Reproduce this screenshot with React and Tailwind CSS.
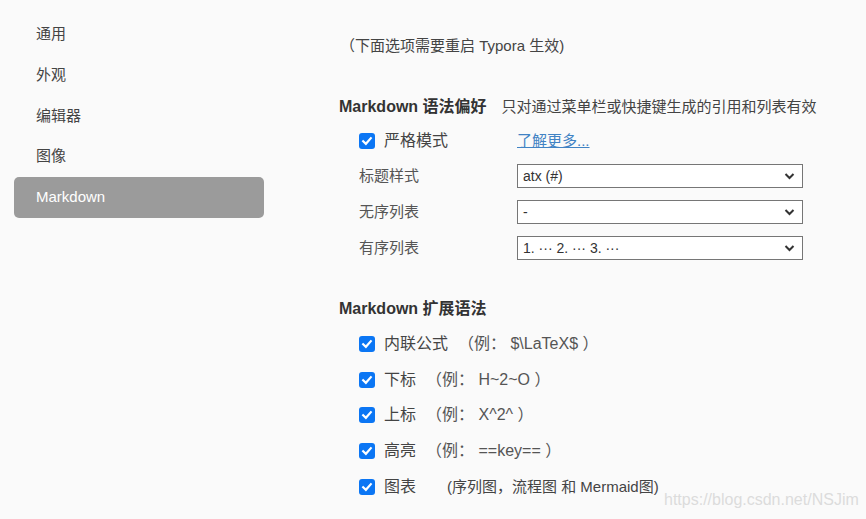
import React from "react";

const font = { fontFamily: '"Liberation Sans", Arial, "Noto Sans CJK SC", sans-serif' };

function Check() {
  return (
    <span className="inline-flex items-center justify-center w-[16px] h-[16px] rounded-[3px] bg-[#0b76f4] shrink-0">
      <svg width="12" height="12" viewBox="0 0 12 12">
        <path d="M2.2 6.2 L4.9 8.8 L9.8 3.2" fill="none" stroke="white" strokeWidth="2.2" strokeLinecap="square" />
      </svg>
    </span>
  );
}

function Select({ value }) {
  return (
    <div className="w-[286px] h-[24px] border border-[#767676] bg-white flex items-center justify-between pl-[5px] pr-[7px] text-[14px] text-[#333]">
      <span>{value}</span>
      <svg width="11" height="8" viewBox="0 0 11 8">
        <path d="M1.5 2 L5.5 6 L9.5 2" fill="none" stroke="#333" strokeWidth="2" />
      </svg>
    </div>
  );
}

function SelRow({ label, value }) {
  return (
    <div className="flex items-center h-[24px]">
      <span className="w-[178px] pl-[20px] text-[15px] text-[#555]">{label}</span>
      <Select value={value} />
    </div>
  );
}

function ExtRow({ label, ex }) {
  return (
    <div className="flex items-center h-[35.75px] pl-[20px]">
      <Check />
      <span className="ml-[9px] text-[16px] text-[#444]">{label}</span>
      <span className="ml-[10px] text-[16px] text-[#555]">{ex}</span>
    </div>
  );
}

export default function App() {
  const nav = ["通用", "外观", "编辑器", "图像", "Markdown"];
  return (
    <div className="w-[866px] h-[519px] bg-[#fafafa] flex relative overflow-hidden" style={font}>
      <div className="w-[278px] pl-[14px] pt-[14px] shrink-0">
        {nav.map((n) => (
          <div
            key={n}
            className={
              "h-[40.75px] w-[250px] flex items-center pl-[22px] text-[15px] rounded-[5px] " +
              (n === "Markdown" ? "bg-[#9b9b9b] text-white" : "text-[#444]")
            }
          >
            {n}
          </div>
        ))}
      </div>
      <div className="pl-[61px] flex flex-col">
        <div className="mt-[36px] h-[20px] flex items-center text-[15px] text-[#444] pl-[1px]">（下面选项需要重启 Typora 生效)</div>
        <div className="mt-[40px] h-[22px] flex items-center">
          <span className="text-[16px] font-bold text-[#333]">Markdown 语法偏好</span>
          <span className="ml-[15px] text-[15px] text-[#444]">只对通过菜单栏或快捷键生成的引用和列表有效</span>
        </div>
        <div className="mt-[11px] h-[24px] flex items-center pl-[20px]">
          <Check />
          <span className="ml-[9px] w-[133px] text-[16px] text-[#444]">严格模式</span>
          <span className="text-[15px] text-[#4183c4] underline">了解更多...</span>
        </div>
        <div className="mt-[11px] flex flex-col gap-[12px]">
          <SelRow label="标题样式" value="atx (#)" />
          <SelRow label="无序列表" value="-" />
          <SelRow label="有序列表" value="1. ··· 2. ··· 3. ···" />
        </div>
        <div className="mt-[38px] h-[22px] flex items-center text-[16px] font-bold text-[#333]">Markdown 扩展语法</div>
        <div className="mt-[6px] flex flex-col">
          <ExtRow label="内联公式" ex="（例： $\LaTeX$ ）" />
          <ExtRow label="下标" ex="（例： H~2~O ）" />
          <ExtRow label="上标" ex="（例： X^2^ ）" />
          <ExtRow label="高亮" ex="（例： ==key== ）" />
          <div className="flex items-center h-[35.75px] pl-[20px]">
            <Check />
            <span className="ml-[9px] text-[16px] text-[#444]">图表</span>
            <span className="ml-[31px] text-[15px] text-[#444]">(序列图，流程图 和 Mermaid图)</span>
          </div>
        </div>
      </div>
      <div className="absolute left-[664px] top-[488px] text-[16px] text-[#dcdcdc]">https://blog.csdn.net/NSJim</div>
    </div>
  );
}
